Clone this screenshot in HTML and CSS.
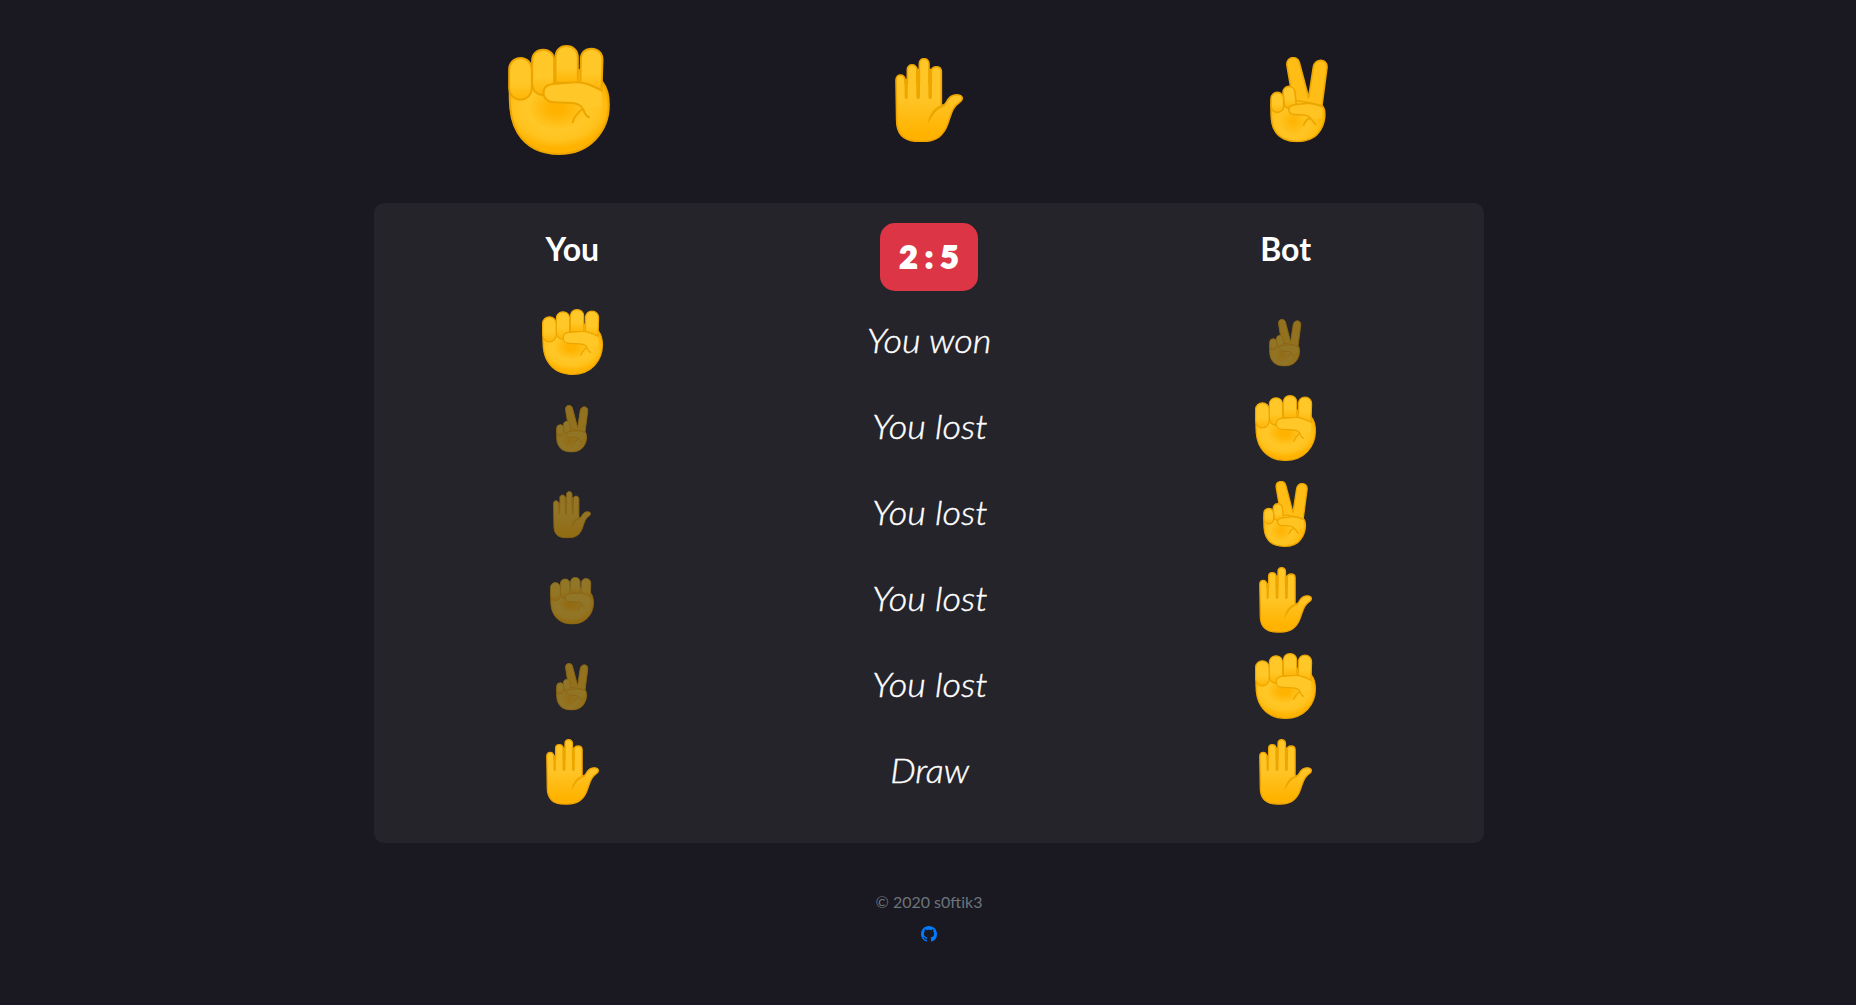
FILE: index.html
```html
<!DOCTYPE html>
<html lang="en">
<head>
<meta charset="utf-8">
<title>Rock Paper Scissors</title>
<link rel="stylesheet" href="styles.css">
</head>
<body>
<svg class="sprite" aria-hidden="true">
  <defs>
    <radialGradient id="skin" gradientUnits="userSpaceOnUse" cx="202" cy="235" r="160" gradientTransform="translate(0 58) scale(1 .75)">
      <stop offset="0" stop-color="#ffb300"/><stop offset=".15" stop-color="#ffb300"/><stop offset=".55" stop-color="#ffc727"/><stop offset=".8" stop-color="#ffc31f"/><stop offset="1" stop-color="#ffb300"/>
    </radialGradient>
    <radialGradient id="skin-v" gradientUnits="userSpaceOnUse" cx="160" cy="245" r="90">
      <stop offset="0" stop-color="#ffb300"/><stop offset=".5" stop-color="#ffc525"/><stop offset="1" stop-color="#ffb805"/>
    </radialGradient>
    <linearGradient id="finger" x1="0" y1="0" x2="0" y2="1">
      <stop offset="0" stop-color="#ffc727"/><stop offset=".6" stop-color="#ffc727"/><stop offset="1" stop-color="#ffb506"/>
    </linearGradient>
    <linearGradient id="palm" x1="0" y1="0" x2="0" y2="1">
      <stop offset="0" stop-color="#ffc727"/><stop offset=".5" stop-color="#ffc425"/><stop offset=".9" stop-color="#ffb300"/>
    </linearGradient>
  </defs>
  <symbol id="rock" viewBox="55 45 305 330">
    <g stroke="#eda600" stroke-width="6" stroke-linejoin="round" stroke-linecap="round">
      <path fill="url(#skin)" d="M60 185C58 238 63 276 84 309C111 352 157 372 208 372C300 372 357 303 357 225C357 196 350 172 339 158L310 120H120Z"/>
      <path fill="url(#finger)" d="M127 91C127 72 141 59 160 59C180 59 193 73 193 91V158L158 196C143 194 127 183 127 160Z"/>
      <path fill="url(#finger)" d="M197 82C197 62 210 48 230 48C250 48 264 62 264 82V158H197Z"/>
      <path fill="url(#finger)" d="M273 87C273 68 286 56 305 56C326 56 338 71 338 89L335 183L272 158Z"/>
      <rect fill="url(#finger)" x="58" y="84" width="68" height="125" rx="34"/>
      <path fill="#ffc727" stroke="none" d="M335 181C307 167 281 154 255 157L190 162C167 164 160 176 161 191C162 205 174 217 193 217L244 219C262 220 273 227 280 235L335 230Z"/>
      <path fill="none" d="M335 181C307 167 281 154 255 157L190 162C167 164 160 176 161 191C162 205 174 217 193 217L244 219C276 221 278 235 285 249Q290 260 298 262M278 237Q256 253 248 277"/>
    </g>
  </symbol>
  <symbol id="paper" viewBox="76 53 204 253">
    <path fill="url(#palm)" stroke="#efa400" stroke-width="5" stroke-linejoin="round" d="M79 119C79 99 105 99 106 119V130L113 130V88C113 69 141 69 142 88V130H149V70C149 50 177 50 178 70V130H185V93C185 75 214 75 215 93V196C229 196 230 182 238 174C247 163 256 163 267 164C281 166 281 180 268 187C248 199 244 223 234 251C221 286 200 303 160 303H147C104 303 81 284 81 240Z"/>
    <path fill="#eda600" d="M105 115H114V171Q109 182 105 171ZM140 85H151V171Q146 182 140 171ZM176 85H187V171Q181 182 176 171ZM174 252C178 216 199 199 216 194L230 191L224 199C203 204 191 219 174 252Z"/>
  </symbol>
  <symbol id="scissors" viewBox="90 52 174 256">
    <g stroke="#eda600" stroke-width="5" stroke-linejoin="round" stroke-linecap="round">
      <path fill="#ffbd16" d="M141 78C137 49 172 47 178 68L206 174L220 82C225 54 262 56 261 83L244 211L165 218Z"/>
      <path fill="url(#skin-v)" d="M94 190C91 235 94 258 106 275C129 315 211 315 236 278C256 254 260 211 246 198L214 190L120 175Z"/>
      <path fill="url(#finger)" d="M129 159C129 134 164 134 165 159L169 196L145 206L133 198Z"/>
      <rect fill="url(#finger)" x="93" y="158" width="38" height="60" rx="19"/>
      <path fill="#ffc422" stroke="none" d="M248 202Q224 190 201 191L165 195C138 198 143 224 164 225L190 226Q207 228 210 238L245 235Z"/>
      <path fill="none" d="M248 202Q224 190 201 191L165 195C138 198 143 224 164 225L190 226Q208 228 214 239Q220 247 227 254M210 236Q197 239 191 256"/>
    </g>
  </symbol>
</svg>

<div class="container">
  <header class="choices">
    <button class="choice" aria-label="Rock"><svg class="rock active"><use href="#rock"/></svg></button>
    <button class="choice" aria-label="Paper"><svg class="paper"><use href="#paper"/></svg></button>
    <button class="choice" aria-label="Scissors"><svg class="scissors"><use href="#scissors"/></svg></button>
  </header>

  <main class="panel">
    <div class="row head">
      <h3 class="name">You</h3>
      <div class="score">2 : 5</div>
      <h3 class="name">Bot</h3>
    </div>
    <div class="row"><svg class="rock"><use href="#rock"/></svg><em>You won</em><svg class="scissors lose"><use href="#scissors"/></svg></div>
    <div class="row"><svg class="scissors lose"><use href="#scissors"/></svg><em>You lost</em><svg class="rock"><use href="#rock"/></svg></div>
    <div class="row"><svg class="paper lose"><use href="#paper"/></svg><em>You lost</em><svg class="scissors"><use href="#scissors"/></svg></div>
    <div class="row"><svg class="rock lose"><use href="#rock"/></svg><em>You lost</em><svg class="paper"><use href="#paper"/></svg></div>
    <div class="row"><svg class="scissors lose"><use href="#scissors"/></svg><em>You lost</em><svg class="rock"><use href="#rock"/></svg></div>
    <div class="row"><svg class="paper"><use href="#paper"/></svg><em>Draw</em><svg class="paper"><use href="#paper"/></svg></div>
  </main>

  <footer class="footer">
    <span class="copyright">© 2020 s0ftik3</span>
    <a class="github" href="#" aria-label="GitHub"><svg viewBox="0 0 16 16"><path fill="currentColor" d="M8 0C3.58 0 0 3.58 0 8c0 3.54 2.29 6.53 5.47 7.59.4.07.55-.17.55-.38 0-.19-.01-.82-.01-1.49-2.01.37-2.53-.49-2.69-.94-.09-.23-.48-.94-.82-1.13-.28-.15-.68-.52-.01-.53.63-.01 1.08.58 1.23.82.72 1.21 1.87.87 2.33.66.07-.52.28-.87.51-1.07-1.78-.2-3.64-.89-3.64-3.95 0-.87.31-1.59.82-2.15-.08-.2-.36-1.02.08-2.12 0 0 .67-.21 2.2.82.64-.18 1.32-.27 2-.27s1.36.09 2 .27c1.53-1.04 2.2-.82 2.2-.82.44 1.1.16 1.92.08 2.12.51.56.82 1.27.82 2.15 0 3.07-1.87 3.75-3.65 3.95.29.25.54.73.54 1.48 0 1.07-.01 1.93-.01 2.2 0 .21.15.46.55.38A8.01 8.01 0 0 0 16 8c0-4.42-3.58-8-8-8z"/></svg></a>
  </footer>
</div>
</body>
</html>
```
FILE: styles.css
```css
* { box-sizing: border-box; }
body {
  margin: 0;
  min-height: 1005px;
  background: #1a1820;
  color: #fff;
  font-family: Lato, "Liberation Sans", sans-serif;
}
.sprite { position: absolute; width: 0; height: 0; }
.container { width: 1110px; margin: 0 auto; padding-left: 2px; box-sizing: content-box; }
.choices {
  display: grid;
  grid-template-columns: repeat(3, 1fr);
  height: 203px;
  padding-bottom: 3px;
}
.choice {
  display: flex;
  align-items: center;
  justify-content: center;
  padding: 0;
  border: 0;
  background: none;
}
.rock { width: 61px; height: 66px; }
.paper { width: 53px; height: 66px; }
.scissors { width: 45px; height: 66px; }
.choice .rock { width: 102px; height: 110px; }
.choice .paper { width: 68px; height: 84.4px; }
.choice .scissors { width: 58px; height: 85.4px; }
.rock.lose { width: 44px; height: 47.5px; }
.paper.lose { width: 38px; height: 47.5px; }
.scissors.lose { width: 32.5px; height: 47.5px; }
.lose { opacity: .5; margin-top: 2px; }
.panel {
  height: 640px;
  padding: 20px;
  border-radius: 10px;
  background: #25242a;
}
.row {
  display: grid;
  grid-template-columns: repeat(3, 1fr);
  align-items: center;
  justify-items: center;
  height: 86px;
}
.head { height: 76px; align-items: start; }
.name { margin: 7px 0 0; font-size: 32px; line-height: 38px; font-weight: 700; }
.score {
  width: 98px;
  height: 68px;
  border-radius: 15px;
  background: #dc3545;
  font-size: 31px;
  font-weight: 900;
  line-height: 67px;
  text-align: center;
  -webkit-text-stroke: 1.8px #fff;
}
em {
  margin-bottom: 2px;
  padding-left: 1px;
  font-size: 32.5px;
  font-weight: 300;
  line-height: 38px;
  transform: scaleX(1.11);
  -webkit-text-stroke: .4px #fff;
}
.footer {
  display: flex;
  flex-direction: column;
  align-items: center;
  padding-top: 47px;
}
.copyright { color: #6c757d; font-size: 16px; line-height: 24px; }
.github { display: block; height: 16px; margin-top: 12px; color: #007bff; }
.github svg { display: block; width: 16px; height: 16px; }
```
